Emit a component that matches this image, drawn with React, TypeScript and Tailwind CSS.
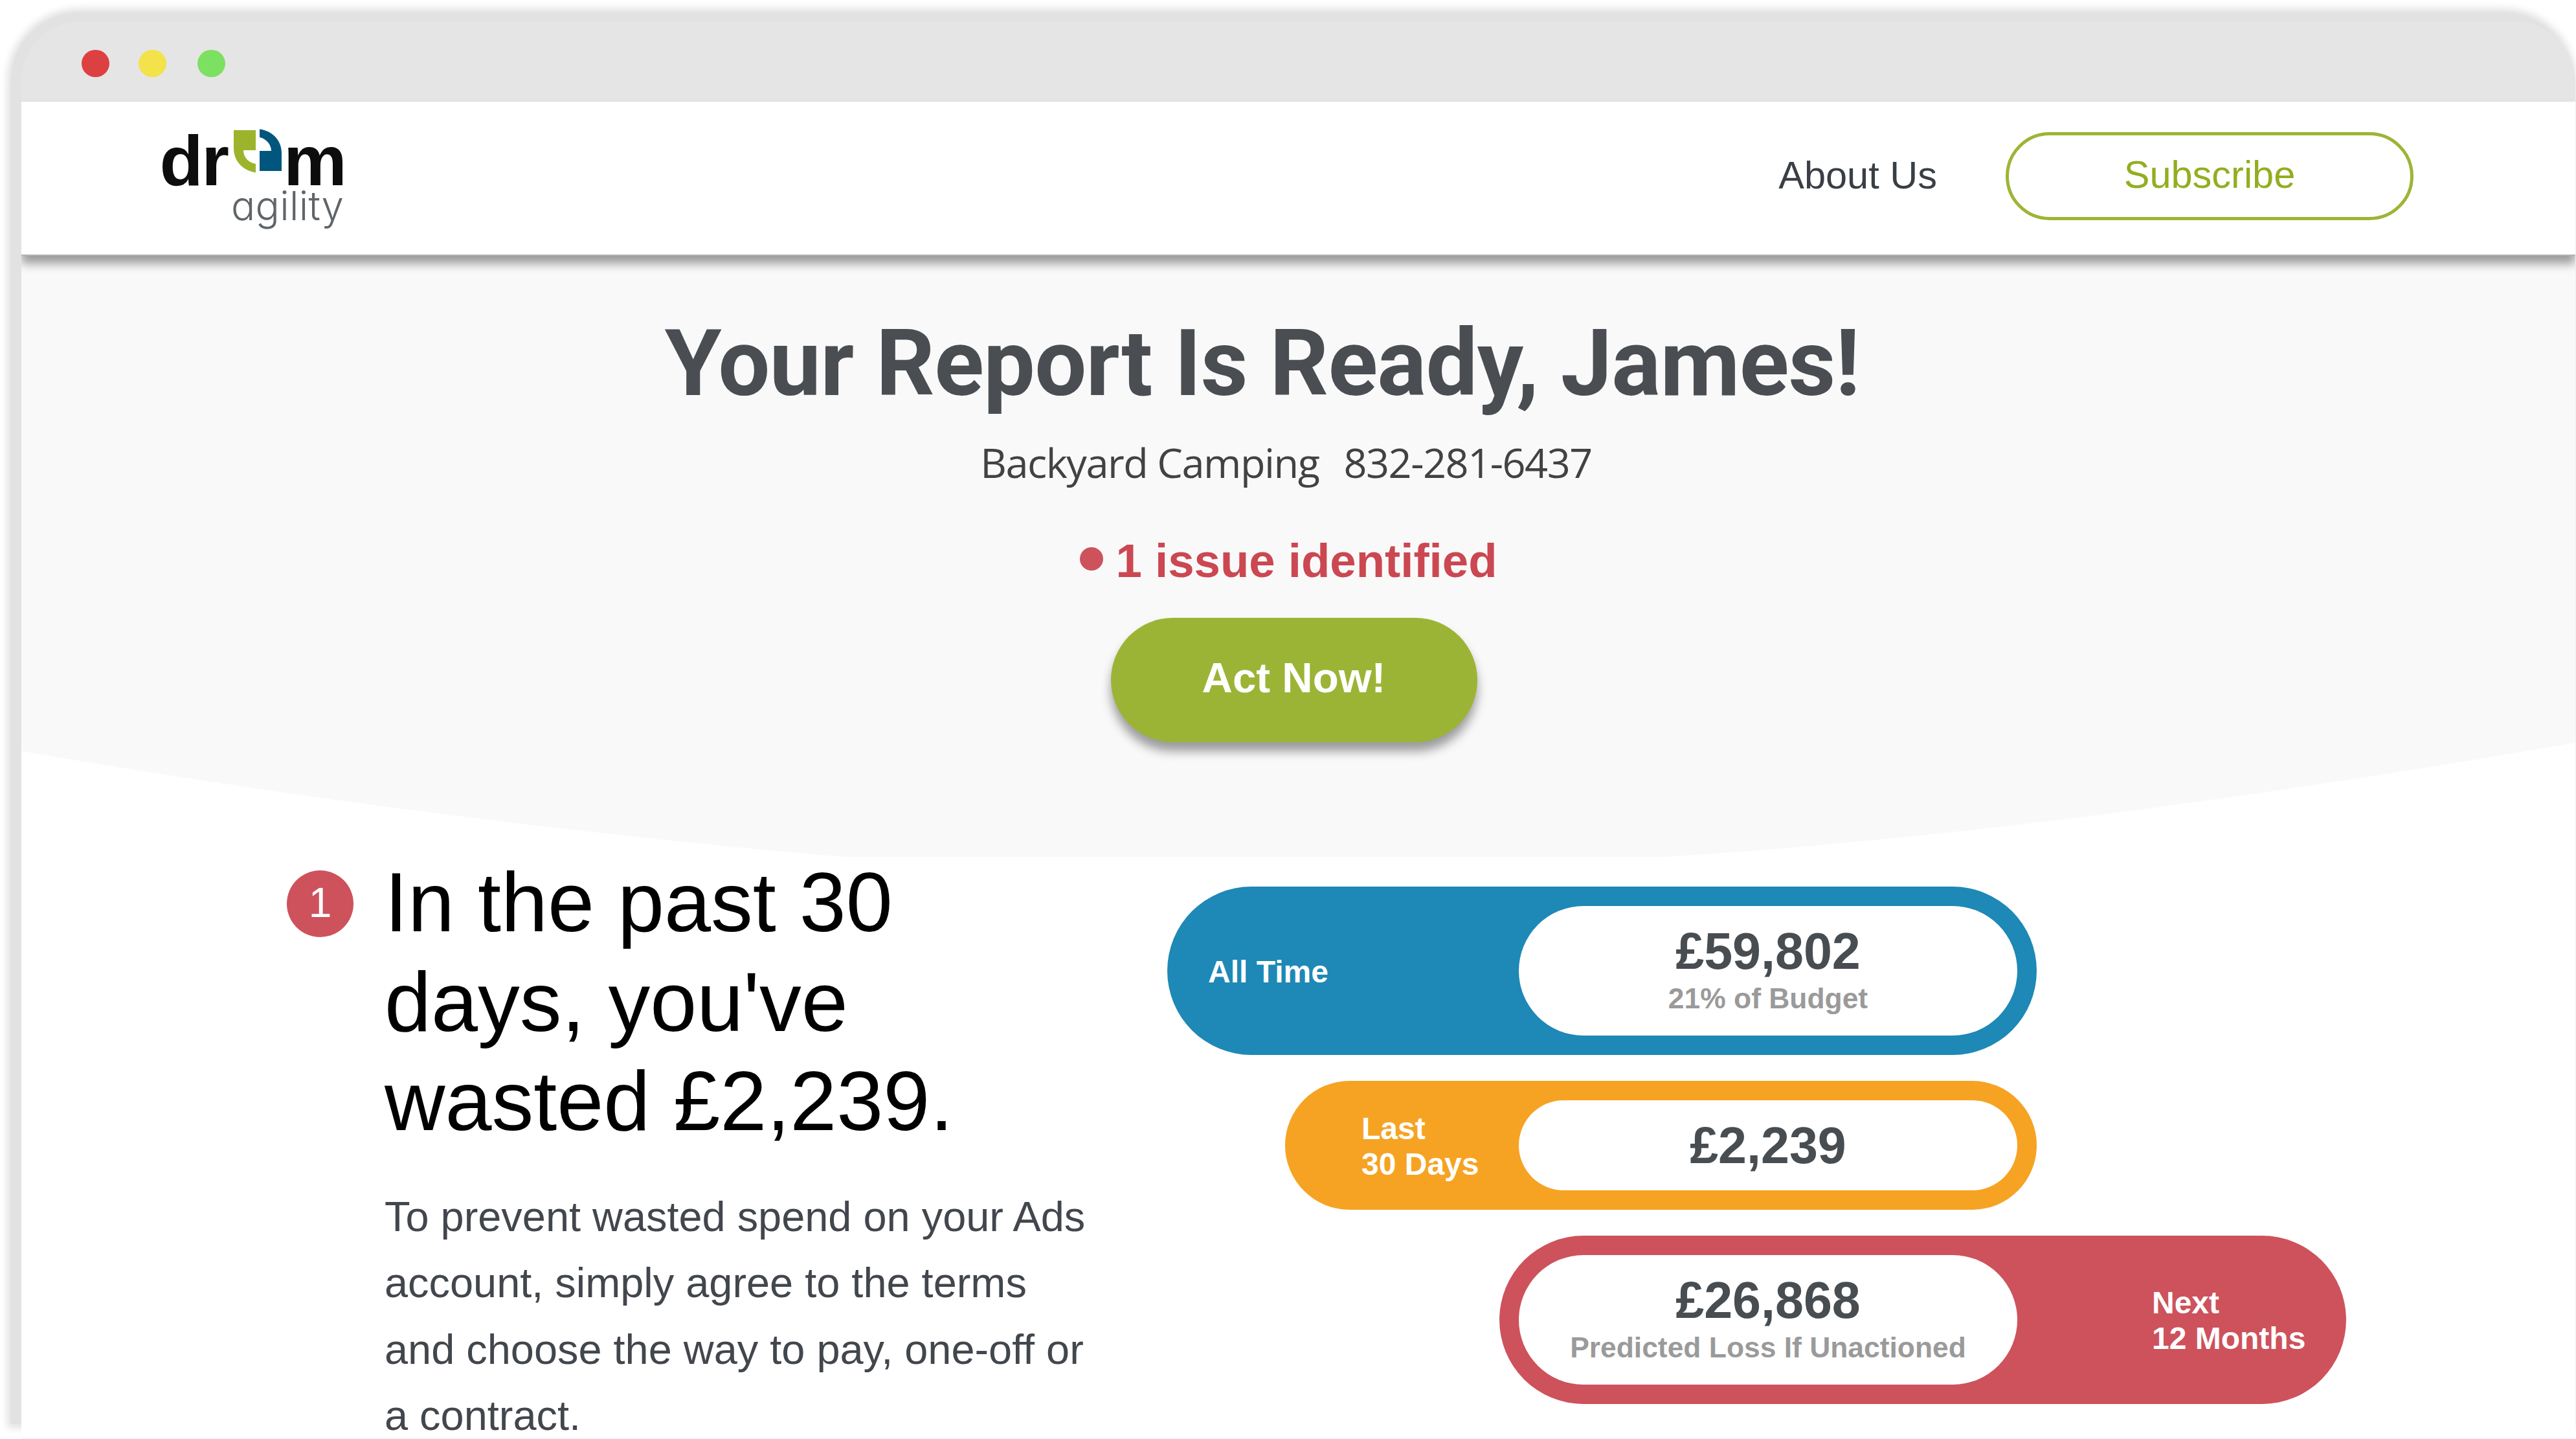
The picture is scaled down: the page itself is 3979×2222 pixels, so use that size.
import clsx from 'clsx'

interface LossCard {
  label: string[]
  amount: string
  note?: string
  className: string
  labelClassName: string
  reversed?: boolean
}

const cards: LossCard[] = [
  {
    label: ['All Time'],
    amount: '£59,802',
    note: '21% of Budget',
    className: 'h-[260px] w-[1343px] bg-[#1e88b6]',
    labelClassName: 'pl-[63px]'
  },
  {
    label: ['Last', '30 Days'],
    amount: '£2,239',
    className: 'ml-[182px] h-[199px] w-[1161px] bg-[#f6a323]',
    labelClassName: 'pl-[118px]'
  },
  {
    label: ['Next', '12 Months'],
    amount: '£26,868',
    note: 'Predicted Loss If Unactioned',
    className: 'ml-[513px] h-[260px] w-[1308px] bg-[#cd525c]',
    labelClassName: 'pl-[208px]',
    reversed: true
  }
]

function Logo () {
  return (
    <svg className="h-[184px] w-[304px]" viewBox="240 180 304 184">
      <g fontFamily="'Liberation Sans', Arial, sans-serif" fontWeight="700" fontSize="110" fill="#0d0d0d">
        <text x="246.5" y="286" textLength="107.5">dr</text>
        <text x="438" y="286">m</text>
      </g>
      <path d="M361 201H395V232H376C376 243 384 251 395 253V266.5C374 263 361 248 361 229Z" fill="#9cb42c" />
      <path d="M401 199.5C421 202 435 217 435 236V264H401V233H419C419 223 411 214 401 212Z" fill="#00567d" />
      <text
        x="357"
        y="339.5"
        fontFamily="Inter, sans-serif"
        fontWeight="300"
        fontSize="62"
        fill="#5f6569"
        textLength="174"
        style={{ fontFeatureSettings: '"cv11"' }}
      >
        agility
      </text>
    </svg>
  )
}

function TitleBar () {
  return (
    <div className="flex h-[124px] items-center rounded-t-[92px] bg-[#e5e5e5] pt-1.5 pl-[93px]">
      <span className="h-[42px] w-[43px] rounded-full bg-[#dd4041]" />
      <span className="ml-[45px] h-[42px] w-[43px] rounded-full bg-[#f3e24a]" />
      <span className="ml-12 h-[42px] w-[43px] rounded-full bg-[#7ce061]" />
    </div>
  )
}

function Header () {
  return (
    <header className="relative z-10 flex h-[238px] items-start border-b-2 border-[#b4b4b4] bg-white pl-[207px] shadow-[0_12px_14px_rgba(0,0,0,0.38)]">
      <div className="pt-[23px]">
        <Logo />
      </div>
      <nav className="mr-[250px] ml-auto flex items-center pt-[47px] text-[59.5px] leading-[68px]">
        <a className="pb-0.5 text-[#3a3e45]">About Us</a>
        <a className="ml-[106px] flex h-[136px] w-[630px] items-center justify-center rounded-full border-[5px] border-[#9cb536] pb-1 text-[#92ae20]">
          Subscribe
        </a>
      </nav>
    </header>
  )
}

function Hero () {
  return (
    <section className="relative flex h-[928px] flex-col items-center">
      <svg className="absolute inset-0 h-full w-full" viewBox="33 394 3945 928" preserveAspectRatio="none">
        <path d="M33 394H3978V1146C3511 1226 3043 1292 2575 1322H1304C880 1286 457 1231 33 1159Z" fill="#f9f9f9" />
      </svg>
      <h1 className="relative mt-[82px] mr-[112px] font-['Roboto'] text-[142px] leading-[170px] font-bold tracking-[-0.8px] whitespace-nowrap text-[#4a4e53]">
        Your Report Is Ready, James!
      </h1>
      <p className="relative mt-[22px] mr-[38px] flex gap-[38px] font-['Open_Sans'] text-[63px] leading-[90px] tracking-[-1.45px] text-[#424242]">
        <span>Backyard Camping</span>
        <span>832-281-6437</span>
      </p>
      <p className="relative mt-[62px] mr-[31px] flex items-center gap-5 text-[72.6px] leading-[90px] font-bold text-[#cb4751]">
        <span className="mb-[7px] h-9 w-9 rounded-full bg-[#cd525c]" />
        1 issue identified
      </p>
      <button className="relative mt-[43px] mr-[14px] h-48 w-[566px] rounded-full bg-[#9cb436] pb-1.5 text-[65.5px] font-bold text-white shadow-[0_14px_16px_rgba(0,0,0,0.38)]">
        Act Now!
      </button>
    </section>
  )
}

function Card ({ label, amount, note, className, labelClassName, reversed }: LossCard) {
  return (
    <div className={clsx('flex items-center justify-between rounded-full p-[30px]', reversed ? 'flex-row-reverse' : 'pl-0', className)}>
      <div className={clsx('flex-1 pt-0.5 text-[48px] leading-[55px] font-bold text-white', labelClassName)}>
        {label.map((line) => (
          <div key={line}>{line}</div>
        ))}
      </div>
      <div className="flex h-full w-[770px] flex-col items-center self-start rounded-full bg-white pt-[30px] font-bold">
        <span className="text-[79px] leading-[80px] text-[#484d52]">{amount}</span>
        {note && <span className="mt-[5px] text-[44.4px] leading-[55px] text-[#9a9a9a]">{note}</span>}
      </div>
    </div>
  )
}

function Report () {
  return (
    <section className="flex pl-[410px]">
      <div className="flex w-[1360px] shrink-0 items-start">
        <div className="mt-[21px] flex h-[103px] w-[103px] shrink-0 items-center justify-center rounded-full bg-[#cd525c] pb-1 text-[64px] leading-none text-white">
          1
        </div>
        <div className="ml-12 whitespace-nowrap">
          <h2 className="-mt-1.5 text-[129.5px] leading-[153.5px] text-black">
            In the past 30
            <br />
            days, you&apos;ve
            <br />
            wasted £2,239.
          </h2>
          <p className="mt-[50px] text-[64.9px] leading-[102.5px] text-[#42464d]">
            To prevent wasted spend on your Ads
            <br />
            account, simply agree to the terms
            <br />
            and choose the way to pay, one-off or
            <br />a contract.
          </p>
        </div>
      </div>
      <div className="flex flex-col gap-10 pt-[46px]">
        {cards.map((card) => (
          <Card key={card.amount} {...card} />
        ))}
      </div>
    </section>
  )
}

export default function App () {
  return (
    <div className="flow-root h-[2222px] w-full overflow-hidden bg-white font-['Liberation_Sans',Arial,sans-serif]">
      {/* grey window frame, the page panel runs past its lower edge */}
      <div className="mt-[19px] ml-[17px] h-[2180px] w-[3956px] rounded-t-[106px] bg-[#e2e2e2] pt-3.5 pl-4 shadow-[0_0_12px_6px_#e2e2e2]">
        <div className="h-[2189px] w-[3945px] overflow-hidden rounded-t-[92px] border-b border-[#efefef]">
          <TitleBar />
          <div className="h-[2064px] bg-white">
            <Header />
            <Hero />
            <Report />
          </div>
        </div>
      </div>
    </div>
  )
}
